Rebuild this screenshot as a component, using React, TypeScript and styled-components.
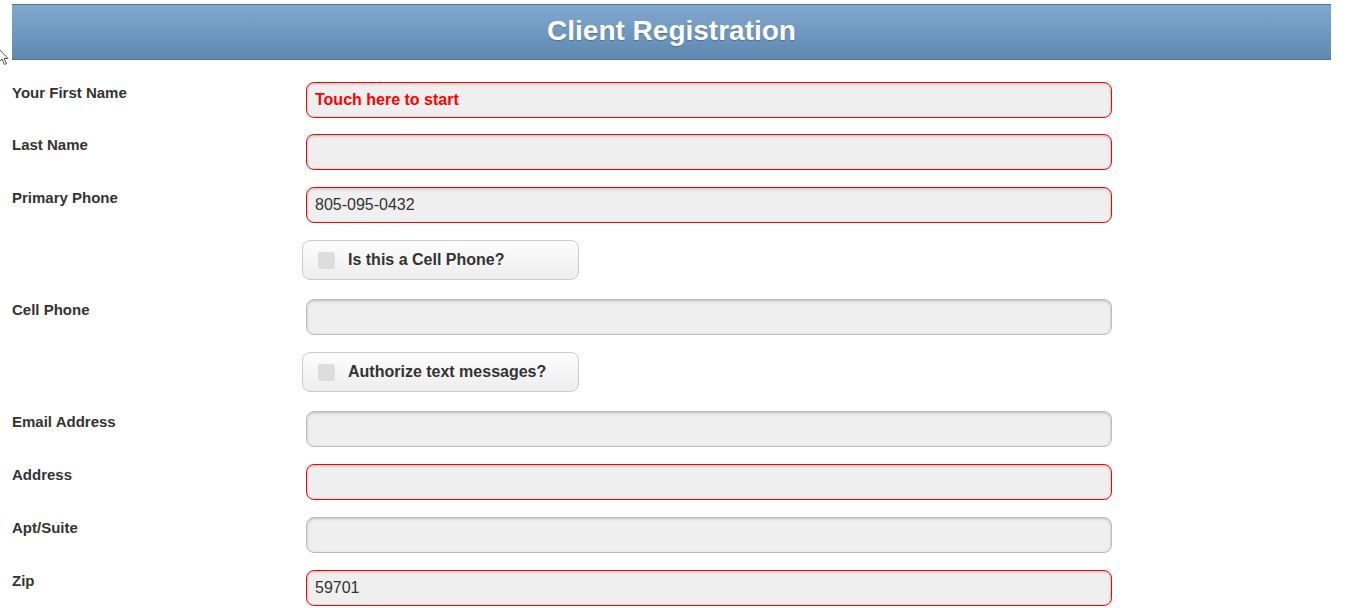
import React from "react";
import styled, { createGlobalStyle } from "styled-components";

const Global = createGlobalStyle`
  html, body { margin: 0; padding: 0; background: #fff; }
  body { font-family: "Liberation Sans", Arial, sans-serif; color: #333; }
  * { box-sizing: border-box; }
`;

const Page = styled.div`
  padding: 4px 15px 0 12px;
  position: relative;
`;

const Header = styled.header`
  height: 56px;
  background: linear-gradient(#82a9d0, #5d88b0);
  border-top: 1px solid #4c719b;
  border-bottom: 1px solid #4c719b;
  display: flex;
  align-items: center;
  justify-content: center;
`;

const Title = styled.h1`
  margin: 0;
  color: #fff;
  font-size: 28px;
  font-weight: bold;
  text-shadow: 0 1px 1px rgba(0, 0, 0, 0.25);
  padding-bottom: 3px;
`;

const Form = styled.div`
  display: flex;
  flex-direction: column;
  padding-top: 22px;
`;

const Row = styled.div<{ $mb: number }>`
  display: flex;
  align-items: flex-start;
  margin-bottom: ${(p) => p.$mb}px;
`;

const Label = styled.label`
  width: 294px;
  flex: none;
  font-size: 15px;
  font-weight: bold;
  line-height: 16px;
  color: #333;
  padding-top: 3px;
`;

const Input = styled.div<{ $req?: boolean; $hint?: boolean }>`
  width: 806px;
  height: 36px;
  border-radius: 8px;
  border: 1px solid ${(p) => (p.$req ? "#ff0000" : "#bbbbbb")};
  background: #efefef;
  box-shadow: inset 0 1px 3px rgba(0, 0, 0, 0.2);
  display: flex;
  align-items: center;
  padding-left: 8px;
  font-size: 16px;
  font-weight: ${(p) => (p.$hint ? "bold" : "normal")};
  color: ${(p) => (p.$hint ? "#ff0000" : "#333")};
`;

const CheckRow = styled.div<{ $mb: number }>`
  margin-left: 290px;
  margin-bottom: ${(p) => p.$mb}px;
`;

const CheckButton = styled.div`
  width: 277px;
  height: 40px;
  border: 1px solid #cccccc;
  border-radius: 8px;
  background: linear-gradient(#fefefe, #ededed);
  display: flex;
  align-items: center;
  padding-left: 15px;
  gap: 13px;
  font-size: 16px;
  font-weight: bold;
  color: #333;
`;

const Box = styled.span`
  width: 17px;
  height: 17px;
  border-radius: 3px;
  background: #dddddd;
  flex: none;
`;

const Cursor = styled.svg`
  position: absolute;
  left: -2px;
  top: 48px;
`;

type Field = { label: string; value?: string; req?: boolean; hint?: boolean; mb: number };

const fields1: Field[] = [
  { label: "Your First Name", value: "Touch here to start", req: true, hint: true, mb: 16 },
  { label: "Last Name", req: true, mb: 17 },
  { label: "Primary Phone", value: "805-095-0432", req: true, mb: 17 },
];

const fields3: Field[] = [
  { label: "Email Address", mb: 17 },
  { label: "Address", req: true, mb: 17 },
  { label: "Apt/Suite", mb: 17 },
  { label: "Zip", value: "59701", req: true, mb: 0 },
];

const FieldRow = ({ f }: { f: Field }) => (
  <Row $mb={f.mb}>
    <Label>{f.label}</Label>
    <Input $req={f.req} $hint={f.hint}>
      {f.value}
    </Input>
  </Row>
);

export default function App() {
  return (
    <>
      <Global />
      <Page>
        <Cursor width="12" height="18" viewBox="0 0 12 18">
          <path d="M1 1 L1 14 L4 11 L6.5 16.5 L8.5 15.5 L6 10.5 L10 10.5 Z" fill="#fff" stroke="#555" strokeWidth="1" />
        </Cursor>
        <Header>
          <Title>Client Registration</Title>
        </Header>
        <Form>
          {fields1.map((f) => (
            <FieldRow key={f.label} f={f} />
          ))}
          <CheckRow $mb={19}>
            <CheckButton>
              <Box />
              Is this a Cell Phone?
            </CheckButton>
          </CheckRow>
          <FieldRow f={{ label: "Cell Phone", mb: 17 }} />
          <CheckRow $mb={19}>
            <CheckButton>
              <Box />
              Authorize text messages?
            </CheckButton>
          </CheckRow>
          {fields3.map((f) => (
            <FieldRow key={f.label} f={f} />
          ))}
        </Form>
      </Page>
    </>
  );
}
